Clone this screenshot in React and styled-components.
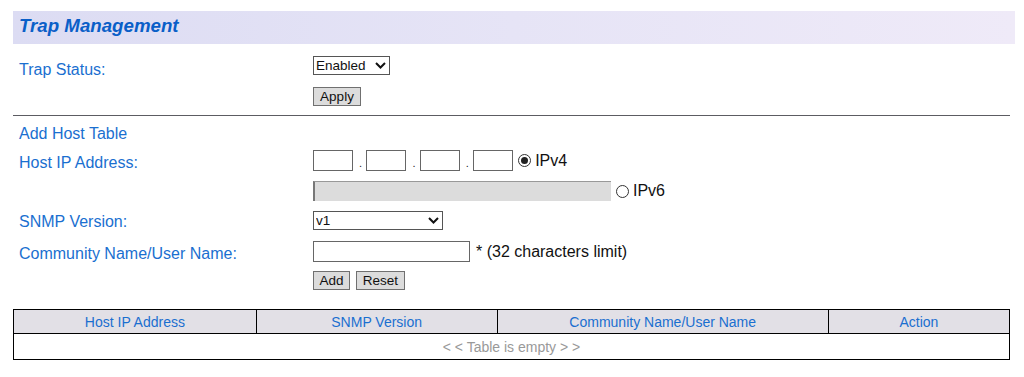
import styled, { createGlobalStyle } from 'styled-components';

const GlobalStyle = createGlobalStyle`
body {
  margin: 0;
  background: #fff;
  font-family: "Liberation Sans", Arial, sans-serif;
}
`;

const columns = ['Host IP Address', 'SNMP Version', 'Community Name/User Name', 'Action'];
const widths = [243, 241, 332, 181];

function Chevron() {
  return (
    <ChevronIcon width="11" height="7" viewBox="0 0 11 7">
      <path d="M1 1 L5.5 5.5 L10 1" fill="none" stroke="#111" strokeWidth="2" />
    </ChevronIcon>
  );
}

function Dropdown({ value, width }) {
  return (
    <SelectWrap $width={width}>
      <Select defaultValue={value}>
        <option>{value}</option>
      </Select>
      <Chevron />
    </SelectWrap>
  );
}

export default function App() {
  return (
    <Page>
      <GlobalStyle />
      <Banner>
        <Title>Trap Management</Title>
      </Banner>

      <Section>
        <Row>
          <Label $offset={5}>Trap Status:</Label>
          <Controls>
            <Dropdown value="Enabled" width={77} />
          </Controls>
        </Row>
        <Row>
          <Label />
          <Controls>
            <Button $width={48}>Apply</Button>
          </Controls>
        </Row>
      </Section>

      <Divider />

      <Form>
        <Heading>Add Host Table</Heading>
        <Row>
          <Label $offset={4}>Host IP Address:</Label>
          <Controls>
            <Octet />
            <Dot>.</Dot>
            <Octet />
            <Dot>.</Dot>
            <Octet />
            <Dot>.</Dot>
            <Octet />
            <Radio type="radio" name="ipver" defaultChecked />
            <Note>IPv4</Note>
          </Controls>
        </Row>
        <Row>
          <Label />
          <Controls>
            <Ipv6Input disabled />
            <Radio type="radio" name="ipver" />
            <Note>IPv6</Note>
          </Controls>
        </Row>
        <Row>
          <Label $offset={2}>SNMP Version:</Label>
          <Controls>
            <Dropdown value="v1" width={130} />
          </Controls>
        </Row>
        <Row $shift={1}>
          <Label $offset={4}>Community Name/User Name:</Label>
          <Controls>
            <TextInput $width={157} />
            <Note>* (32 characters limit)</Note>
          </Controls>
        </Row>
        <Row $shift={-1}>
          <Label />
          <Controls>
            <Button $width={37}>Add</Button>
            <Button $width={49}>Reset</Button>
          </Controls>
        </Row>
      </Form>

      <Table>
        <thead>
          <tr>
            {columns.map((c, i) => (
              <Th key={c} style={{ width: widths[i] }}>{c}</Th>
            ))}
          </tr>
        </thead>
        <tbody>
          <tr>
            <Empty colSpan={4}>&lt; &lt; Table is empty &gt; &gt;</Empty>
          </tr>
        </tbody>
      </Table>
    </Page>
  );
}

const Page = styled.div`
width: 1002px;
padding: 11px 9px 0 13px;
`;

const Banner = styled.div`
box-sizing: border-box;
height: 33px;
display: flex;
align-items: center;
padding: 0 0 3px 6px;
background: linear-gradient(to right, #dcdcf3, #e6e4f6 50%, #efeaf8);
`;

const Title = styled.h1`
margin: 0;
font-size: 18.7px;
font-weight: bold;
font-style: italic;
color: #0a5fc8;
`;

const Section = styled.div`
display: flex;
flex-direction: column;
gap: 12px;
margin-top: 12px;
`;

const Row = styled.div`
display: flex;
align-items: flex-start;
margin-top: ${p => p.$shift ?? 0}px;
`;

const Label = styled.div`
width: 294px;
padding-left: 6px;
padding-top: ${p => p.$offset ?? 0}px;
margin-bottom: -${p => p.$offset ?? 0}px;
font-size: 16px;
line-height: 18px;
color: #1a6fd0;
`;

const Controls = styled.div`
display: flex;
align-items: center;
gap: 6px;
`;

const SelectWrap = styled.div`
position: relative;
width: ${p => p.$width}px;
height: 19px;
`;

const Select = styled.select`
display: block;
appearance: none;
width: 100%;
height: 100%;
margin: 0;
padding: 0 0 0 2px;
border: 1px solid #555;
border-radius: 0;
background: #fff;
font-family: "Liberation Sans", Arial, sans-serif;
font-size: 13.5px;
color: #111;
`;

const ChevronIcon = styled.svg`
position: absolute;
right: 4px;
top: 6px;
pointer-events: none;
`;

const Button = styled.button`
display: block;
width: ${p => p.$width}px;
height: 19px;
margin: 0;
padding: 0;
border: 1px solid #707070;
border-radius: 0;
background: #dcdcdc;
font-family: "Liberation Sans", Arial, sans-serif;
font-size: 13.5px;
color: #111;
`;

const Divider = styled.div`
width: 997px;
height: 1px;
margin-top: 9px;
background: #5c5c62;
`;

const Form = styled.div`
display: flex;
flex-direction: column;
gap: 10px;
margin-top: 8px;
`;

const Heading = styled.div`
padding: 2px 0 0 6px;
margin-bottom: -2px;
font-size: 16px;
line-height: 16px;
color: #1a6fd0;
`;

const TextInput = styled.input`
display: block;
box-sizing: border-box;
width: ${p => p.$width}px;
height: 21px;
margin: 0;
border: 1px solid #666;
border-radius: 0;
background: #fff;
`;

const Octet = styled(TextInput).attrs({ $width: 40 })``;

const Dot = styled.span`
width: 1.4px;
font-size: 11px;
line-height: 1;
padding-top: 6px;
color: #222;
`;

const Ipv6Input = styled.input`
display: block;
box-sizing: border-box;
width: 298px;
height: 20px;
margin: 0;
border: none;
border-top: 1px solid #999;
border-left: 2px solid #777;
border-radius: 0;
background: #dcdcdc;
`;

const Radio = styled.input`
appearance: none;
box-sizing: border-box;
width: 13px;
height: 13px;
margin: 0 -2px 0 -1px;
border: 1px solid #333;
border-radius: 50%;
background: #fff;
display: grid;
place-content: center;

&:checked::after {
  content: '';
  width: 7px;
  height: 7px;
  border-radius: 50%;
  background: #222;
}
`;

const Note = styled.span`
font-size: 16px;
color: #111;
`;

const Table = styled.table`
width: 997px;
margin-top: 19px;
border-collapse: collapse;
border: 1px solid #000;
font-size: 14px;
`;

const Th = styled.th`
height: 23px;
padding: 0;
border: 1px solid #000;
font-weight: normal;
color: #1a6fd0;
background: #e2e0e6;
`;

const Empty = styled.td`
height: 25px;
padding: 0;
text-align: center;
color: #999;
`;
